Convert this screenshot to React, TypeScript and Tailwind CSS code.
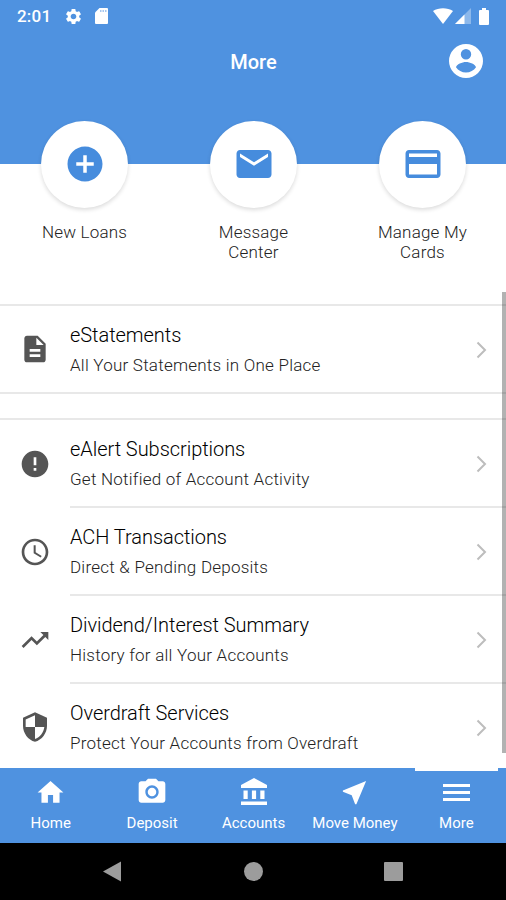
import React from 'react';
import {
  MdAddCircle,
  MdCameraAlt,
  MdCreditCard,
  MdDescription,
  MdEmail,
  MdError,
  MdHome,
  MdNearMe,
  MdSchedule,
  MdSecurity,
  MdSettings,
  MdTrendingUp,
} from 'react-icons/md';

interface ShortcutProps {
  icon: React.ReactNode;
  label: string;
}

const Shortcut: React.FC<ShortcutProps> = ({ icon, label }) => (
  <div className="flex flex-1 flex-col items-center">
    <div className="flex size-[87px] items-center justify-center rounded-full bg-white pb-px text-[#468cdd] shadow-[0_2px_4px_rgba(0,0,0,0.14)]">
      {icon}
    </div>
    <div className="mt-[14px] w-[110px] text-center text-[17px] leading-5 font-light tracking-[0.2px] text-[#222]">
      {label}
    </div>
  </div>
);

interface ListRowProps {
  icon: React.ReactNode;
  title: string;
  subtitle: string;
  last?: boolean;
}

const ListRow: React.FC<ListRowProps> = ({ icon, title, subtitle, last }) => (
  <div className={last ? 'flex h-[86px] shrink-0' : 'flex h-[88px] shrink-0'}>
    <div className="flex w-[70px] shrink-0 items-center justify-center text-[#555]">{icon}</div>
    <div
      className={
        last
          ? 'flex flex-1 items-center justify-between pr-[19px]'
          : 'flex flex-1 items-center justify-between border-b-2 border-[#e8e8e8] pr-[19px]'
      }
    >
      <div className="-mt-px">
        <div className="text-[20px] leading-6 font-light tracking-[-0.05px] text-black">{title}</div>
        <div className="mt-2 text-[17px] leading-5 font-light tracking-[0.23px] text-[#222]">{subtitle}</div>
      </div>
      <svg width="11" height="18" viewBox="0 0 11 18" fill="none" stroke="#bdbdbd" strokeWidth="2" className="mt-[2px]">
        <path d="M1.5 1.5 9 9l-7.500 7.500" />
      </svg>
    </div>
  </div>
);

interface TabProps {
  icon: React.ReactNode;
  label: string;
  active?: boolean;
}

const Tab: React.FC<TabProps> = ({ icon, label, active }) => (
  <div className="relative flex flex-1 flex-col items-center pt-2 text-white">
    {active && <div className="absolute top-0 h-[3px] w-[83px] bg-white" />}
    <div className="flex h-8 items-center justify-center">{icon}</div>
    <div className="mt-[5px] text-[15px] leading-5 whitespace-nowrap">{label}</div>
  </div>
);

const ProfileIcon = () => (
  <svg width="34" height="34" viewBox="0 0 34 34" fill="white" fillRule="evenodd">
    <path d="M17 0a17 17 0 1 1 0 34 17 17 0 0 1 0-34zM17 5a5.200 5.200 0 1 0 0 10.400A5.200 5.200 0 0 0 17 5zM7 23.300c2.200 3.200 5.800 5.300 10 5.300s7.800-2.100 10-5.300c-.4-3-6.200-5.300-10-5.300S7.400 20.300 7 23.300z" />
  </svg>
);

const BankIcon = () => (
  <svg width="26" height="28" viewBox="0 0 26 28" fill="currentColor">
    <path d="M13 0 26 7v3H0V7zM2.500 12.500h4.200v8.500H2.500zM10.900 12.500h4.200v8.500h-4.200zM19.300 12.500h4.200v8.500h-4.200zM0 23.500h26V27H0z" />
  </svg>
);

const StatusBar = () => (
  <div className="flex h-8 items-center justify-between pr-4 pl-[17px] text-white">
    <div className="flex items-center">
      <span className="w-[47px] text-[17px] leading-5 font-medium tracking-[0.2px]">2:01</span>
      <MdSettings size={19} />
      <svg width="13" height="16" viewBox="0 0 13 16" fill="currentColor" className="ml-3">
        <path d="M4.500 0H12a1 1 0 0 1 1 1v14a1 1 0 0 1-1 1H1a1 1 0 0 1-1-1V4.500z" />
        <path d="M5 2h1.500v2H5zM7.500 2H9v2H7.500zM10 2h1.500v2H10z" fill="#4f92e0" opacity="0.5" />
      </svg>
    </div>
    <div className="flex items-center">
      <svg width="20" height="16" viewBox="0 0 20 16" fill="currentColor">
        <path d="M0 3C5.500-.8 14.500-.8 20 3L10 16z" />
      </svg>
      <svg width="16" height="16" viewBox="0 0 16 16" fill="currentColor" className="ml-[2px]">
        <path d="M16 0v16H0z" opacity="0.35" />
        <path d="M9.500 6.500V16H0z" />
      </svg>
      <svg width="10" height="17" viewBox="0 0 10 17" fill="currentColor" className="ml-2 mr-px">
        <path d="M3 0h4v2h2a1 1 0 0 1 1 1v13a1 1 0 0 1-1 1H1a1 1 0 0 1-1-1V3a1 1 0 0 1 1-1h2z" />
      </svg>
    </div>
  </div>
);

const App: React.FC = () => {
  return (
    <div className="flex h-[900px] w-[506px] flex-col overflow-hidden bg-white font-[Roboto,sans-serif]">
      <div className="h-[164px] shrink-0 bg-[#4f92e0]">
        <StatusBar />
        <div className="flex h-[58px] items-center pr-[23px]">
          <div className="w-[58px]" />
          <div className="flex-1 pt-px text-center text-[20px] leading-6 font-medium text-white">More</div>
          <ProfileIcon />
        </div>
      </div>
      <div className="-mt-[43px] -mr-px flex h-[183px] shrink-0">
        <Shortcut icon={<MdAddCircle size={42} />} label="New Loans" />
        <Shortcut icon={<MdEmail size={42} />} label="Message Center" />
        <Shortcut icon={<MdCreditCard size={42} />} label="Manage My Cards" />
      </div>
      <div className="relative flex min-h-0 flex-1 flex-col">
        <div className="h-[90px] shrink-0 border-y-2 border-[#e8e8e8]">
          <ListRow icon={<MdDescription size={32} />} title="eStatements" subtitle="All Your Statements in One Place" last />
        </div>
        <div className="mt-6 border-t-2 border-[#e8e8e8]">
          <ListRow icon={<MdError size={32} />} title="eAlert Subscriptions" subtitle="Get Notified of Account Activity" />
          <ListRow icon={<MdSchedule size={32} />} title="ACH Transactions" subtitle="Direct & Pending Deposits" />
          <ListRow icon={<MdTrendingUp size={32} />} title="Dividend/Interest Summary" subtitle="History for all Your Accounts" />
          <ListRow icon={<MdSecurity size={32} />} title="Overdraft Services" subtitle="Protect Your Accounts from Overdraft" last />
        </div>
        <div className="absolute -top-3 right-0 h-[461px] w-1 bg-black/30" />
      </div>
      <div className="-mr-px flex h-[75px] shrink-0 bg-[#4f92e0]">
        <Tab icon={<MdHome size={31} />} label="Home" />
        <Tab icon={<MdCameraAlt size={32} />} label="Deposit" />
        <Tab icon={<BankIcon />} label="Accounts" />
        <Tab icon={<MdNearMe size={31} />} label="Move Money" />
        <Tab
          icon={
            <svg width="27" height="17" viewBox="0 0 27 17" fill="currentColor">
              <path d="M0 0h27v3H0zM0 7h27v3H0zM0 14h27v3H0z" />
            </svg>
          }
          label="More"
          active
        />
      </div>
      <div className="h-[57px] shrink-0 bg-black">
        <svg width="506" height="57" viewBox="0 0 506 57" fill="#9c9c9c">
          <path d="M103 28.500 121 18.500v20z" />
          <circle cx="253.500" cy="28.500" r="9.500" />
          <rect x="384" y="19" width="19" height="19" rx="1" />
        </svg>
      </div>
    </div>
  );
};

export default App;
